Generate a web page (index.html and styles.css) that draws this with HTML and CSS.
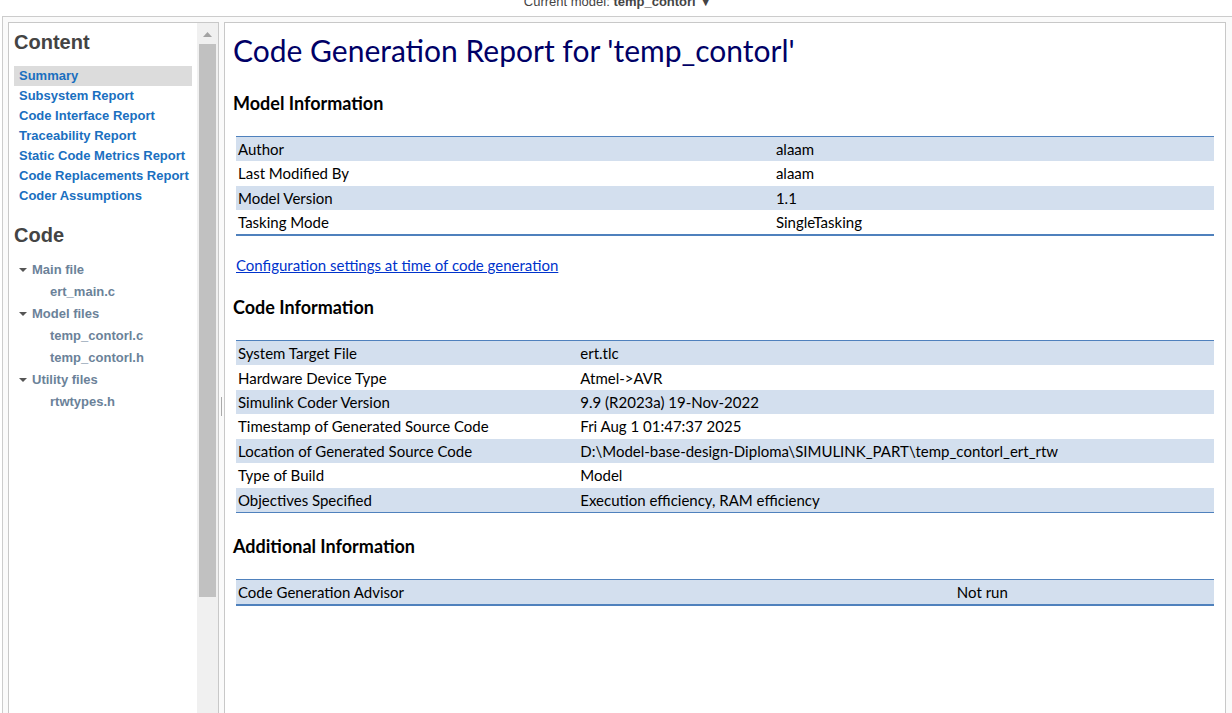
FILE: index.html
```html
<!DOCTYPE html>
<html lang="en">
<head>
<meta charset="utf-8">
<title>Code Generation Report</title>
<link rel="stylesheet" href="styles.css">
</head>
<body>
<header class="topbar">
  <button class="model-picker" type="button">Current model: <b>temp_contorl</b> ▼</button>
</header>
<div class="frame">
  <aside class="sidebar">
    <div class="sidebar-body">
      <h2 class="side-title">Content</h2>
      <nav class="links">
        <a class="link active" href="#summary">Summary</a>
        <a class="link" href="#subsystem">Subsystem Report</a>
        <a class="link" href="#interface">Code Interface Report</a>
        <a class="link" href="#traceability">Traceability Report</a>
        <a class="link" href="#metrics">Static Code Metrics Report</a>
        <a class="link" href="#replacements">Code Replacements Report</a>
        <a class="link" href="#assumptions">Coder Assumptions</a>
      </nav>
      <h2 class="side-title">Code</h2>
      <nav class="tree">
        <button class="group" type="button"><svg class="caret" viewBox="0 0 8 4"><path d="M0 0h8L4 4z"/></svg>Main file</button>
        <a class="file" href="#ert_main.c">ert_main.c</a>
        <button class="group" type="button"><svg class="caret" viewBox="0 0 8 4"><path d="M0 0h8L4 4z"/></svg>Model files</button>
        <a class="file" href="#temp_contorl.c">temp_contorl.c</a>
        <a class="file" href="#temp_contorl.h">temp_contorl.h</a>
        <button class="group" type="button"><svg class="caret" viewBox="0 0 8 4"><path d="M0 0h8L4 4z"/></svg>Utility files</button>
        <a class="file" href="#rtwtypes.h">rtwtypes.h</a>
      </nav>
    </div>
    <div class="scrollbar">
      <svg class="scroll-up" viewBox="0 0 9 5"><path d="M0 5h9L4.500 0z"/></svg>
      <div class="thumb"></div>
    </div>
  </aside>
  <div class="splitter"><div class="grip"></div></div>
  <main class="report">
    <h1 class="title">Code Generation Report for 'temp_contorl'</h1>
    <h3 class="section">Model Information</h3>
    <table class="info model">
      <tr><td class="key">Author</td><td>alaam</td></tr>
      <tr><td>Last Modified By</td><td>alaam</td></tr>
      <tr><td>Model Version</td><td>1.1</td></tr>
      <tr><td>Tasking Mode</td><td>SingleTasking</td></tr>
    </table>
    <a class="config" href="#config">Configuration settings at time of code generation</a>
    <h3 class="section">Code Information</h3>
    <table class="info code">
      <tr><td class="key">System Target File</td><td>ert.tlc</td></tr>
      <tr><td>Hardware Device Type</td><td>Atmel-&gt;AVR</td></tr>
      <tr><td>Simulink Coder Version</td><td>9.9 (R2023a) 19-Nov-2022</td></tr>
      <tr><td>Timestamp of Generated Source Code</td><td>Fri Aug 1 01:47:37 2025</td></tr>
      <tr><td>Location of Generated Source Code</td><td>D:\Model-base-design-Diploma\SIMULINK_PART\temp_contorl_ert_rtw</td></tr>
      <tr><td>Type of Build</td><td>Model</td></tr>
      <tr><td>Objectives Specified</td><td>Execution efficiency, RAM efficiency</td></tr>
    </table>
    <h3 class="section">Additional Information</h3>
    <table class="info extra">
      <tr><td class="key">Code Generation Advisor</td><td>Not run</td></tr>
    </table>
  </main>
</div>
</body>
</html>
```

FILE: styles.css
```css
* { box-sizing: border-box; }
body {
  margin: 0;
  height: 100vh;
  overflow: hidden;
  background: #fff;
  font-family: "Liberation Sans", Arial, sans-serif;
  font-size: 13px;
}
button {
  border: 0;
  padding: 0;
  background: none;
  font: inherit;
  text-align: left;
}
a { text-decoration: none; }
.topbar {
  height: 16px;
  display: flex;
  justify-content: center;
  align-items: flex-end;
  padding: 0 0 6px 4px;
  overflow: hidden;
}
.model-picker {
  flex: none;
  line-height: 16px;
  color: #444;
}
.frame {
  display: flex;
  height: calc(100vh + 62px);
  margin-left: 2px;
  padding: 5px 6px 0 5px;
  border: 1px solid #ccc;
  border-right: 0;
  background: #fafafa;
}
.sidebar {
  display: flex;
  flex: none;
  width: 211px;
  border: 1px solid #c8c8c8;
  background: #fff;
}
.sidebar-body {
  flex: 1;
  padding: 5px 5px 0;
}
.side-title {
  margin: 0;
  font-size: 20px;
  line-height: 28px;
  color: #444;
}
.links {
  display: flex;
  flex-direction: column;
  margin: 10px 0 15px;
}
.link {
  padding-left: 5px;
  line-height: 20px;
  font-weight: bold;
  color: #1a6fbf;
  white-space: nowrap;
}
.active { background: #dcdcdc; }
.tree {
  display: flex;
  flex-direction: column;
  margin-top: 10px;
  line-height: 22px;
  font-weight: bold;
  color: #6b8299;
}
.group {
  display: flex;
  align-items: center;
  gap: 5px;
  padding-left: 5px;
  color: inherit;
}
.caret {
  width: 8px;
  height: 4px;
  fill: #555;
}
.file {
  padding-left: 36px;
  color: inherit;
}
.scrollbar {
  display: flex;
  flex-direction: column;
  align-items: center;
  width: 21px;
  padding-top: 9px;
  background: #f0f0f0;
}
.scroll-up {
  flex: none;
  width: 9px;
  height: 5px;
  fill: #a3a3a3;
}
.thumb {
  width: 17px;
  height: 73%;
  margin-top: 7px;
  background: #c1c1c1;
}
.splitter {
  display: flex;
  flex: none;
  align-items: center;
  justify-content: center;
  width: 5px;
}
.grip {
  width: 1px;
  height: 19px;
  background: #aaa;
}
.report {
  flex: 1;
  min-width: 0;
  padding: 7px 8px 0;
  border: 1px solid #c8c8c8;
  background: #fff;
  font-family: Lato, Carlito, sans-serif;
  font-size: 15px;
  color: #000;
}
.title {
  margin: 0;
  font-size: 30px;
  font-weight: normal;
  line-height: 40px;
  color: #006;
}
.section {
  margin: 22px 0;
  font-size: 18px;
  line-height: 22px;
}
.info {
  width: calc(100% - 6px);
  margin: 0 3px;
  border-spacing: 0;
  border-top: 1px solid #4f81bd;
  border-bottom: 2px solid #4f81bd;
  table-layout: fixed;
}
.info td {
  padding: 0 2px;
  line-height: 24px;
}
.info tr:nth-child(odd) { background: #d3dfee; }
.model { height: 100px; }
.code {
  height: 173px;
  border-bottom-width: 1px;
}
.extra { height: 27px; }
.model .key { width: 55%; }
.code .key { width: 35%; }
.extra .key { width: 73.5%; }
.config {
  display: block;
  margin: 19px 3px 0;
  line-height: 20px;
  color: #03c;
  text-decoration: underline;
}
.config + .section { margin-top: 21px; }
```
